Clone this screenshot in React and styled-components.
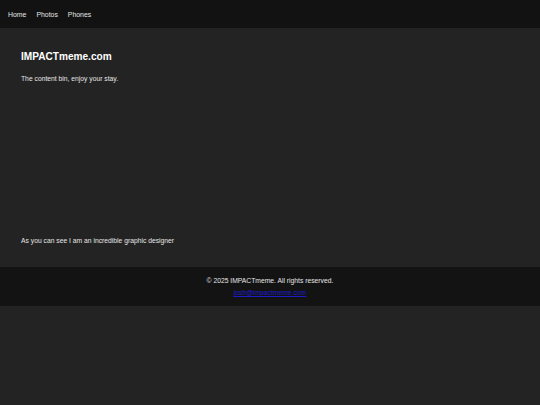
import React from "react";
import styled, { createGlobalStyle } from "styled-components";

const GlobalStyle = createGlobalStyle`
  html, body {
    margin: 0;
    padding: 0;
    background: #232323;
    color: #e6e6e6;
    font-family: "Liberation Sans", Arial, sans-serif;
  }
`;

const Nav = styled.nav`
  height: 28px;
  background: #121212;
  display: flex;
  align-items: center;
  gap: 10px;
  padding: 0 8px;
  a {
    color: #e6e6e6;
    text-decoration: none;
    font-size: 6.9px;
  }
`;

const Main = styled.main`
  box-sizing: border-box;
  height: 239px;
  padding: 23px 21px 21px;
  display: flex;
  flex-direction: column;
  background: #232323;
  .title {
    margin: 0 0 12px;
    font-size: 10.1px;
    font-weight: bold;
    color: #ffffff;
  }
  .text {
    margin: 0;
    font-size: 6.75px;
    line-height: 10px;
  }
  .bottom {
    margin-top: auto;
  }
`;

const Footer = styled.footer`
  box-sizing: border-box;
  height: 39px;
  padding: 8px 0 7px;
  background: #131313;
  text-align: center;
  font-size: 6.75px;
  line-height: 12px;
  p {
    margin: 0;
  }
  a {
    color: #1c1ccc;
  }
`;

const App = () => {
  const links = ["Home", "Photos", "Phones"];
  return (
    <>
      <GlobalStyle />
      <Nav>
        {links.map((link) => (
          <a key={link} href="#">
            {link}
          </a>
        ))}
      </Nav>
      <Main>
        <h1 className="title">IMPACTmeme.com</h1>
        <p className="text">The content bin, enjoy your stay.</p>
        <p className="text bottom">As you can see I am an incredible graphic designer</p>
      </Main>
      <Footer>
        <p>© 2025 IMPACTmeme. All rights reserved.</p>
        <a href="#">josh@impactmeme.com</a>
      </Footer>
    </>
  );
};

export default App;
